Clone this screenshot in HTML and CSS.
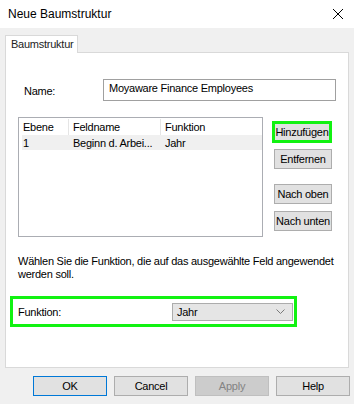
FILE: index.html
```html
<!DOCTYPE html>
<html>
<head>
<meta charset="utf-8">
<link rel="stylesheet" href="styles.css">
</head>
<body>
<div class="window">
  <div class="titlebar">
    <span class="title">Neue Baumstruktur</span>
    <svg class="close" width="12" height="12" viewBox="0 0 12 12"><path d="M1 1 L11 11 M11 1 L1 11" stroke="#000" stroke-width="1" fill="none"/></svg>
  </div>
  <div class="tabs">
    <div class="tab">Baumstruktur</div>
  </div>
  <div class="panel">
    <div class="name-row">
      <span class="name-label">Name:</span>
      <div class="input">Moyaware Finance Employees</div>
    </div>
    <div class="list-row">
      <div class="list">
        <div class="lhead">
          <span class="c1">Ebene</span><span class="c2">Feldname</span><span class="c3">Funktion</span>
        </div>
        <div class="lrow">
          <span class="c1">1</span><span class="c2">Beginn d. Arbei...</span><span class="c3">Jahr</span>
        </div>
      </div>
      <div class="side">
        <div class="btn hl">Hinzufügen</div>
        <div class="btn b2">Entfernen</div>
        <div class="btn b3">Nach oben</div>
        <div class="btn b4">Nach unten</div>
      </div>
    </div>
    <p class="hint">Wählen Sie die Funktion, die auf das ausgewählte Feld angewendet werden soll.</p>
    <div class="func">
      <span class="func-label">Funktion:</span>
      <div class="select">
        <span>Jahr</span>
        <svg width="9" height="5" viewBox="0 0 9 5"><path d="M0.5 0.5 L4.5 4.5 L8.5 0.5" stroke="#7a7a7a" stroke-width="1" fill="none"/></svg>
      </div>
    </div>
  </div>
  <div class="footer">
    <div class="fbtn ok">OK</div>
    <div class="fbtn">Cancel</div>
    <div class="fbtn dis">Apply</div>
    <div class="fbtn">Help</div>
  </div>
</div>
</body>
</html>
```
FILE: styles.css
```css
html, body {
  margin: 0;
  padding: 0;
}
body {
  width: 354px;
  height: 404px;
  overflow: hidden;
  background: #f0f0f0;
  font-family: "Liberation Sans", Arial, sans-serif;
  font-size: 11px;
  letter-spacing: -0.25px;
  color: #000;
}
.window {
  width: 354px;
  height: 404px;
  display: flex;
  flex-direction: column;
}
.titlebar {
  height: 28px;
  background: #fff;
  display: flex;
  align-items: center;
  justify-content: space-between;
  padding: 0 10px 0 8px;
  box-sizing: border-box;
}
.title {
  font-size: 12px;
  letter-spacing: 0;
}
.close {
  display: block;
}
.tabs {
  display: flex;
  padding: 7px 0 0 5px;
  height: 17px;
}
.tab {
  width: 73px;
  box-sizing: border-box;
  height: 18px;
  background: #fff;
  border: 1px solid #d9d9d9;
  border-bottom: none;
  padding: 2px 0 0 5px;
  position: relative;
  z-index: 1;
  color: #222;
}
.panel {
  margin: 0 5px;
  height: 316px;
  box-sizing: border-box;
  background: #fff;
  border: 1px solid #d9d9d9;
  display: flex;
  flex-direction: column;
}
.name-row {
  display: flex;
  align-items: center;
  margin-top: 26px;
  padding-left: 18px;
  height: 22px;
}
.name-label {
  width: 79px;
  padding-top: 1px;
}
.input {
  width: 233px;
  height: 22px;
  box-sizing: border-box;
  border: 1px solid #a0a0a0;
  padding: 2px 0 0 5px;
}
.list-row {
  display: flex;
  margin-top: 16px;
  padding-left: 12px;
}
.list {
  width: 245px;
  height: 120px;
  box-sizing: border-box;
  border: 1px solid #abadb3;
  padding: 1px 0 0 3px;
}
.lhead, .lrow {
  display: flex;
  height: 16px;
  align-items: center;
  white-space: nowrap;
}
.lhead span {
  border-right: 1px solid #e5e5e5;
  height: 16px;
  line-height: 16px;
}
.lrow {
  background: #f0f0f0;
  height: 15px;
  margin-top: 0;
}
.c1 { width: 47px; padding-left: 1px; box-sizing: border-box; }
.c2 { width: 92px; padding-left: 4px; box-sizing: border-box; }
.c3 { width: 99px; padding-left: 4px; box-sizing: border-box; }
.lhead .c3 { border-right: none; }
.side {
  display: flex;
  flex-direction: column;
  margin-left: 9px;
  padding-top: 4px;
}
.btn {
  width: 58px;
  height: 20px;
  box-sizing: border-box;
  background: #e1e1e1;
  border: 1px solid #adadad;
  display: flex;
  align-items: center;
  justify-content: center;
  margin-left: 2px;
  white-space: nowrap;
}
.btn.hl {
  width: 60px;
  height: 22px;
  margin-left: 0;
  border: 3px solid #11f211;
}
.b2 { margin-top: 6px; }
.b3 { margin-top: 15px; }
.b4 { margin-top: 7px; }
.hint {
  margin: 18px 0 0 12px;
  line-height: 13px;
  width: 326px;
}
.func {
  margin: 15px 0 0 4px;
  width: 287px;
  height: 31px;
  box-sizing: border-box;
  border: 3px solid #11f211;
  display: flex;
  align-items: center;
  padding-left: 5px;
}
.func-label {
  width: 154px;
}
.select {
  width: 121px;
  height: 18px;
  box-sizing: border-box;
  background: #e5e5e5;
  border: 1px solid #acacac;
  display: flex;
  align-items: center;
  justify-content: space-between;
  padding: 0 7px 0 4px;
}
.select svg { display: block; }
.footer {
  display: flex;
  justify-content: flex-end;
  gap: 7px;
  padding: 8px 4px 0 0;
}
.fbtn {
  width: 74px;
  height: 20px;
  box-sizing: border-box;
  background: #e1e1e1;
  border: 1px solid #adadad;
  display: flex;
  align-items: center;
  justify-content: center;
}
.fbtn.ok {
  border-color: #0078d7;
}
.fbtn.dis {
  background: #cccccc;
  border-color: #bfbfbf;
  color: #838383;
}
```
